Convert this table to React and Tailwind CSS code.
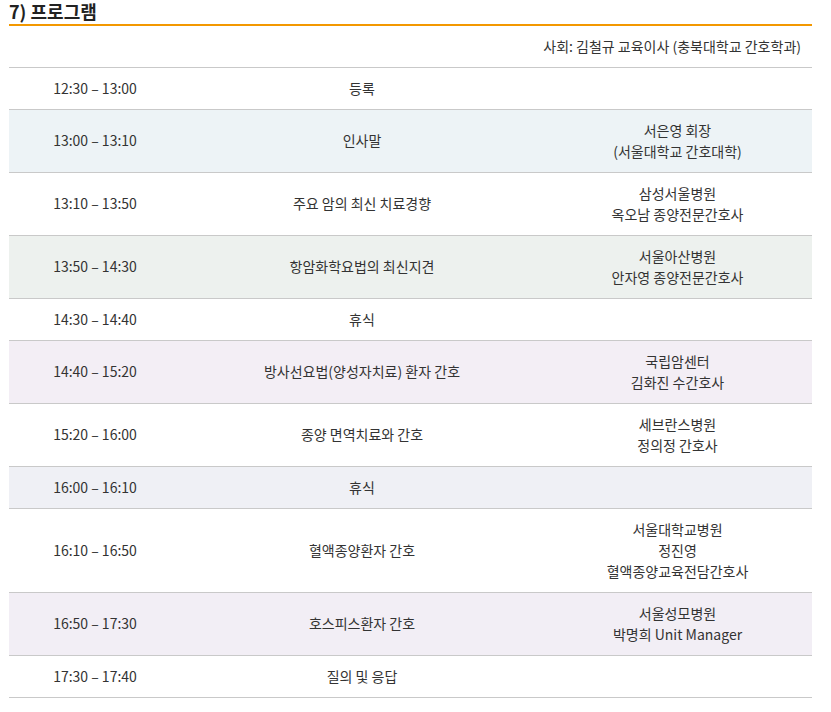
const ROWS = [
  { time: '12:30 – 13:00', title: '등록', speaker: [], bg: 'bg-white', h: 'h-[42px]' },
  { time: '13:00 – 13:10', title: '인사말', speaker: ['서은영 회장', '(서울대학교 간호대학)'], bg: 'bg-[#edf3f6]', h: 'h-[63px]' },
  { time: '13:10 – 13:50', title: '주요 암의 최신 치료경향', speaker: ['삼성서울병원', '옥오남 종양전문간호사'], bg: 'bg-white', h: 'h-[63px]' },
  { time: '13:50 – 14:30', title: '항암화학요법의 최신지견', speaker: ['서울아산병원', '안자영 종양전문간호사'], bg: 'bg-[#edf1ee]', h: 'h-[63px]' },
  { time: '14:30 – 14:40', title: '휴식', speaker: [], bg: 'bg-white', h: 'h-[42px]' },
  { time: '14:40 – 15:20', title: '방사선요법(양성자치료) 환자 간호', speaker: ['국립암센터', '김화진 수간호사'], bg: 'bg-[#f3eef5]', h: 'h-[63px]' },
  { time: '15:20 – 16:00', title: '종양 면역치료와 간호', speaker: ['세브란스병원', '정의정 간호사'], bg: 'bg-white', h: 'h-[63px]' },
  { time: '16:00 – 16:10', title: '휴식', speaker: [], bg: 'bg-[#eff0f5]', h: 'h-[42px]' },
  { time: '16:10 – 16:50', title: '혈액종양환자 간호', speaker: ['서울대학교병원', '정진영', '혈액종양교육전담간호사'], bg: 'bg-white', h: 'h-[84px]' },
  { time: '16:50 – 17:30', title: '호스피스환자 간호', speaker: ['서울성모병원', '박명희 Unit Manager'], bg: 'bg-[#f2eef5]', h: 'h-[63px]' },
  { time: '17:30 – 17:40', title: '질의 및 응답', speaker: [], bg: 'bg-white', h: 'h-[42px]' },
];

export default function App() {
  return (
    <div className="min-h-[712px] bg-white pl-[9px] pr-[19px] font-['Noto_Sans_CJK_KR','Noto_Sans',sans-serif] text-[14px] text-[#333]">
      {/* Section title */}
      <div className="flex h-[26px] items-end border-b-2 border-[#f39800] pb-[3px]">
        <h2 className="text-[18px] font-bold leading-[20px] text-[#222]">7) 프로그램</h2>
      </div>

      {/* Moderator */}
      <div className="flex h-[41px] items-center justify-end pr-[11px] leading-[21px]">
        사회: 김철규 교육이사 (충북대학교 간호학과)
      </div>

      {/* Program table */}
      <div className="border-t border-[#c9c9c9]">
        {ROWS.map((row, i) => (
          <div
            key={i}
            className={`grid grid-cols-[172px_362px_1fr] items-center border-b border-[#c9c9c9] pb-[1px] leading-[21px] ${row.bg} ${row.h}`}
          >
            <div className="text-center">{row.time}</div>
            <div className="text-center">{row.title}</div>
            <div className="text-center">
              {row.speaker.map((s) => (
                <div key={s}>{s}</div>
              ))}
            </div>
          </div>
        ))}
      </div>
    </div>
  );
}
